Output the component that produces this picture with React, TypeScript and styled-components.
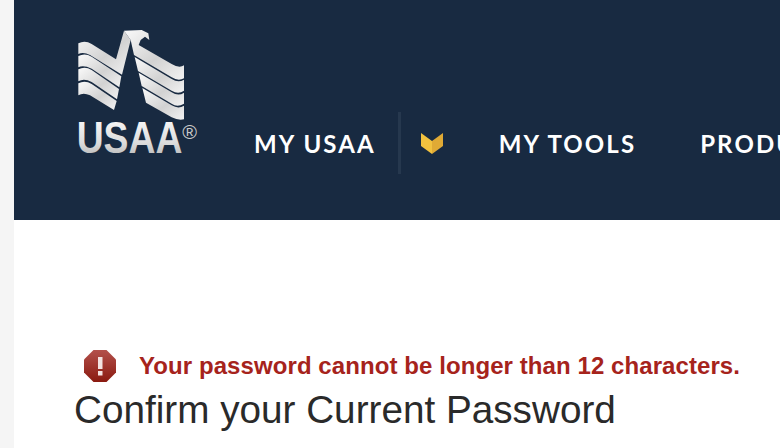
import React from 'react';
import styled, { createGlobalStyle } from 'styled-components';

const GlobalStyle = createGlobalStyle`
  html, body {
    margin: 0;
    padding: 0;
    background: #f5f5f5;
    overflow: hidden;
  }
`;

const Page = styled.div`
  width: 780px;
  height: 448px;
  padding-left: 14px;
  box-sizing: border-box;
  overflow: hidden;
`;

const Main = styled.main`
  width: 766px;
  height: 448px;
  background: #fff;
  overflow: hidden;
`;

const Header = styled.header`
  height: 220px;
  background: #182a41;
  display: flex;
  align-items: flex-start;
  padding-left: 46px;
  overflow: hidden;
`;

const LogoSvg = styled.svg`
  width: 150px;
  height: 150px;
  margin-top: 20px;
  flex: none;
`;

const Nav = styled.nav`
  display: flex;
  align-items: center;
  height: 62px;
  margin: 112px 0 0 44px;
  flex: none;
`;

const NavLink = styled.a<{ $gap: number }>`
  font-family: Lato, "Open Sans", sans-serif;
  font-weight: 700;
  font-size: 24px;
  letter-spacing: 2.1px;
  color: #fff;
  white-space: nowrap;
  margin-right: ${(p) => p.$gap}px;
`;

const Divider = styled.span`
  width: 3px;
  height: 62px;
  background: #26384e;
  margin-right: 20px;
`;

const ChevronSvg = styled.svg`
  width: 22px;
  height: 22px;
  margin-right: 56px;
  margin-top: 1px;
`;

const Content = styled.section`
  padding: 130px 0 0 60px;
`;

const ErrorRow = styled.div`
  display: flex;
  align-items: center;
  height: 32px;
  margin-left: 10px;
`;

const ErrorIcon = styled.svg`
  width: 32px;
  height: 32px;
  flex: none;
  margin-right: 23px;
`;

const ErrorText = styled.span`
  font-family: "Liberation Sans", Arial, sans-serif;
  font-weight: 700;
  font-size: 24px;
  letter-spacing: 0.08px;
  color: #a6231c;
  white-space: nowrap;
`;

const Title = styled.h1`
  margin: 6px 0 0;
  font-family: "Liberation Sans", Arial, sans-serif;
  font-weight: 400;
  font-size: 38.7px;
  line-height: 44px;
  color: #2a2a2a;
  white-space: nowrap;
`;

const Logo = () => (
  <LogoSvg viewBox="0 0 450 450">
    <defs>
      <linearGradient id="wing" x1="0" y1="0" x2="1" y2="1">
        <stop offset="0" stopColor="#fafafa" />
        <stop offset="0.55" stopColor="#d2d2d2" />
        <stop offset="1" stopColor="#f2f2f2" />
      </linearGradient>
      <linearGradient id="letters" x1="0" y1="0" x2="0" y2="1">
        <stop offset="0" stopColor="#ffffff" />
        <stop offset="0.6" stopColor="#dcdcdc" />
        <stop offset="1" stopColor="#a9a9a9" />
      </linearGradient>
    </defs>
    <g fill="url(#wing)">
      <path d="M55 70Q75 60 95 72L168 118L192 32L212 60L186 164L90 105Q70 94 55 102Z" />
      <path d="M55 108Q75 98 95 110L184 169L178 202L95 146Q70 134 55 142Z" />
      <path d="M55 148Q75 138 95 150L177 207L171 238L95 186Q72 174 55 184Z" />
      <path d="M55 190Q75 180 95 192L170 243L162 270L90 226Q70 216 55 226Z" />
      <path d="M192 32L245 30L265 40L268 60L255 50L242 60L236 75L335 132Q358 146 372 136V175Q355 185 335 172L222 105L212 60Z" />
      <path d="M224 111L335 177Q355 190 372 179V212Q355 224 335 212L234 153Z" />
      <path d="M236 158L335 217Q355 230 372 218V251Q352 263 335 251L245 198Z" />
      <path d="M247 204L335 256Q355 268 372 257V298Q355 302 335 292L258 248Z" />
    </g>
    <text x="50" y="400" fontFamily="'Liberation Sans', Arial, sans-serif" fontWeight="700" fontSize="135" fill="url(#letters)" textLength="317" lengthAdjust="spacingAndGlyphs">USAA</text>
    <text x="367" y="356" fontFamily="'Liberation Sans', Arial, sans-serif" fontSize="60" fill="#c9c9c9">®</text>
  </LogoSvg>
);

const Chevron = () => (
  <ChevronSvg viewBox="0 0 22 22">
    <path d="M0 0L11 8V21L0 13Z" fill="#f2c23f" />
    <path d="M22 0L11 8V21L22 13Z" fill="#e0aa35" />
  </ChevronSvg>
);

const Alert = () => (
  <ErrorIcon viewBox="0 0 32 32">
    <defs>
      <linearGradient id="alert" x1="0" y1="0" x2="0" y2="1">
        <stop offset="0" stopColor="#b3504b" />
        <stop offset="1" stopColor="#8a1a10" />
      </linearGradient>
    </defs>
    <path d="M9.5 0H22.5L32 9.5V22.5L22.5 32H9.5L0 22.5V9.5Z" fill="url(#alert)" />
    <rect x="14" y="7" width="4.5" height="12" fill="#f3e3e2" />
    <rect x="14" y="21" width="4.5" height="4.5" fill="#f3e3e2" />
  </ErrorIcon>
);

export default function App() {
  return (
    <Page>
      <GlobalStyle />
      <Main>
        <Header>
          <Logo />
          <Nav>
            <NavLink $gap={22}>MY USAA</NavLink>
            <Divider />
            <Chevron />
            <NavLink $gap={64}>MY TOOLS</NavLink>
            <NavLink $gap={0}>PRODUCTS</NavLink>
          </Nav>
        </Header>
        <Content>
          <ErrorRow>
            <Alert />
            <ErrorText>Your password cannot be longer than 12 characters.</ErrorText>
          </ErrorRow>
          <Title>Confirm your Current Password</Title>
        </Content>
      </Main>
    </Page>
  );
}
